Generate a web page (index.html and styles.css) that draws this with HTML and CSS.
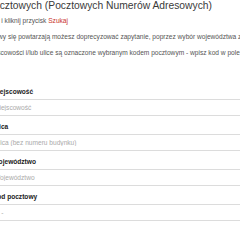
FILE: index.html
```
<!DOCTYPE html>
<html>
<head>
  <link rel="stylesheet" href="styles.css">
</head>
<body>
  <div class="page">
    <!-- Intro text -->
    <div class="intro">
      <h1 class="intro-title">Wyszukiwarka kodów pocztowych (Pocztowych Numerów Adresowych)</h1>
      <p class="intro-text">Wpisz nazwę miejscowości i/lub ulicy i kliknij przycisk <span class="accent">Szukaj</span></p>
      <p class="intro-text">Jeżeli w wynikach wyszukiwania nazwy się powtarzają możesz doprecyzować zapytanie, poprzez wybór województwa z listy</p>
      <p class="intro-text">Jeżeli chciałbyś sprawdzić jakie miejscowości i/lub ulice są oznaczone wybranym kodem pocztowym - wpisz kod w pole Kod pocztowy</p>
    </div>

    <!-- Search form -->
    <form class="search-form">
      <div class="form-group">
        <label class="form-label" for="city">Miejscowość</label>
        <input class="form-control" type="text" id="city" placeholder="Miejscowość">
      </div>
      <div class="form-group">
        <label class="form-label" for="street">Ulica</label>
        <input class="form-control" type="text" id="street" placeholder="Ulica (bez numeru budynku)">
      </div>
      <div class="form-group">
        <label class="form-label" for="province">Województwo</label>
        <input class="form-control" type="text" id="province" placeholder="Województwo">
      </div>
      <div class="form-group">
        <label class="form-label" for="zip">Kod pocztowy</label>
        <input class="form-control" type="text" id="zip" placeholder="__-___">
      </div>
    </form>
  </div>
</body>
</html>
```

FILE: styles.css
```
* {
  margin: 0;
  padding: 0;
  box-sizing: border-box;
}

body {
  font-family: "Liberation Sans", Arial, sans-serif;
  background: #fff;
  color: #444;
  overflow: hidden;
}

.page {
  width: 240px;
  height: 240px;
  overflow: hidden;
}

/* Intro */
.intro {
  margin-left: -113px;
  white-space: nowrap;
}

.intro-title {
  font-size: 10.3px;
  line-height: 12px;
  font-weight: normal;
  color: #3a3a3a;
  margin-bottom: 4.5px;
}

.intro-text {
  font-size: 6.6px;
  line-height: 8px;
  color: #555;
  padding-left: 4px;
  margin-bottom: 8px;
}

.accent {
  color: #c9302c;
}

/* Form */
.search-form {
  width: 262px;
  margin-top: 31px;
  margin-left: -12px;
}

.form-group {
  margin-bottom: 7px;
}

.form-label {
  display: block;
  font-size: 6.6px;
  line-height: 8px;
  font-weight: bold;
  color: #222;
  padding-left: 4.5px;
  margin-bottom: 3.5px;
}

.form-control {
  display: block;
  width: 100%;
  height: 16.5px;
  padding: 0 5px;
  border: 1px solid #dcdcdc;
  border-radius: 2px;
  font-family: inherit;
  font-size: 6.6px;
  color: #555;
  background: #fff;
  outline: none;
}

.form-control::placeholder {
  color: #aaa;
}
```
